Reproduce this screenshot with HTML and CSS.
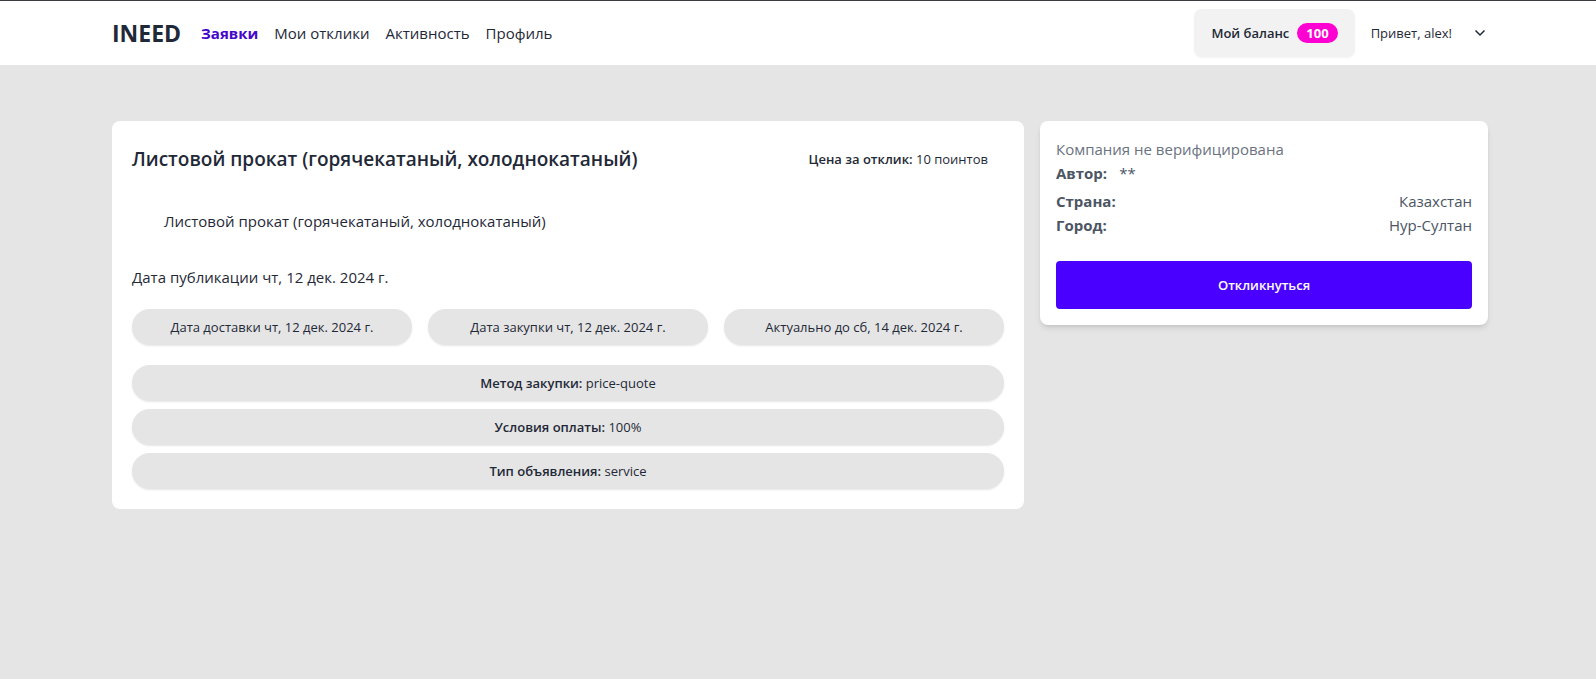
FILE: index.html
```html
<!DOCTYPE html>
<html lang="ru">
<head>
<meta charset="utf-8">
<title>INEED</title>
<meta name="viewport" content="width=device-width, initial-scale=1">
<link rel="stylesheet" href="styles.css">
</head>
<body>
<header class="header">
  <nav class="nav">
    <a class="logo" href="#">INEED</a>
    <a class="nav-link active" href="#">Заявки</a>
    <a class="nav-link" href="#">Мои отклики</a>
    <a class="nav-link" href="#">Активность</a>
    <a class="nav-link" href="#">Профиль</a>
  </nav>
  <div class="account">
    <button class="balance" type="button">Мой баланс <span class="badge">100</span></button>
    <button class="user" type="button">Привет, alex!
      <svg class="chevron" viewBox="0 0 12 12" aria-hidden="true"><path d="M1.500 3.500 6 8l4.500-4.500"/></svg>
    </button>
  </div>
</header>
<main class="content">
  <article class="card request">
    <div class="request-head">
      <h1 class="title">Листовой прокат (горячекатаный, холоднокатаный)</h1>
      <p class="price"><b>Цена за отклик:</b> 10 поинтов</p>
    </div>
    <p class="description">Листовой прокат (горячекатаный, холоднокатаный)</p>
    <p class="published">Дата публикации чт, 12 дек. 2024 г.</p>
    <div class="dates">
      <div class="pill">Дата доставки чт, 12 дек. 2024 г.</div>
      <div class="pill">Дата закупки чт, 12 дек. 2024 г.</div>
      <div class="pill">Актуально до сб, 14 дек. 2024 г.</div>
    </div>
    <div class="terms">
      <div class="pill"><b>Метод закупки:</b> price-quote</div>
      <div class="pill"><b>Условия оплаты:</b> 100%</div>
      <div class="pill"><b>Тип объявления:</b> service</div>
    </div>
  </article>
  <aside class="card company">
    <p class="unverified">Компания не верифицирована</p>
    <p class="author"><strong>Автор:</strong><span>**</span></p>
    <dl class="facts">
      <div class="fact"><dt>Страна:</dt><dd>Казахстан</dd></div>
      <div class="fact"><dt>Город:</dt><dd>Нур-Султан</dd></div>
    </dl>
    <button class="respond" type="button">Откликнуться</button>
  </aside>
</main>
</body>
</html>
```
FILE: styles.css
```css
* {
  box-sizing: border-box;
  margin: 0;
}

body {
  background: #e5e5e5;
  color: #1f2937;
  font: 15px/24px "Segoe UI", "Open Sans", "Noto Sans", sans-serif;
}

a {
  color: inherit;
  text-decoration: none;
}

button {
  border: 0;
  background: none;
  color: inherit;
  font: inherit;
  cursor: pointer;
}

b {
  font-weight: 600;
}

.header {
  display: flex;
  align-items: center;
  justify-content: space-between;
  padding: 8px 108px 8px 112px;
  border-top: 1px solid #3d3b3f;
  background: #fff;
}

.nav {
  display: flex;
  align-items: center;
  gap: 16px;
}

.logo {
  margin-right: 4px;
  font-size: 23px;
  font-weight: 700;
}

.active {
  color: #4506cb;
  font-weight: 700;
}

.account {
  display: flex;
  align-items: center;
  gap: 16px;
}

.balance {
  display: flex;
  align-items: center;
  gap: 8px;
  height: 48px;
  padding: 0 17px;
  border-radius: 8px;
  background: #f2f2f2;
  box-shadow: 0 1px 2px rgba(0, 0, 0, 0.05);
  font-size: 13px;
  font-weight: 600;
}

.badge {
  padding: 0 9px;
  border-radius: 10px;
  background: #ff00d3;
  color: #fff;
  font-size: 13px;
  font-weight: 700;
  line-height: 20px;
}

.user {
  display: flex;
  align-items: center;
  gap: 22px;
  padding: 0;
  font-size: 13px;
}

.chevron {
  width: 12px;
  height: 12px;
  margin-right: 2px;
  fill: none;
  stroke: #1f2937;
  stroke-width: 1.5;
}

.content {
  display: grid;
  grid-template-columns: repeat(3, 1fr);
  align-items: start;
  gap: 16px;
  padding: 56px 108px 56px 112px;
}

.card {
  border-radius: 8px;
  background: #fff;
}

.request {
  grid-column: span 2;
  padding: 20px;
}

.request-head {
  display: flex;
  align-items: center;
  justify-content: space-between;
}

.title {
  font-size: 19px;
  font-weight: 600;
  line-height: 28px;
}

.price {
  padding: 8px 16px;
  font-size: 13px;
  line-height: 20px;
}

.description {
  padding: 32px;
}

.dates {
  display: grid;
  grid-template-columns: repeat(3, 1fr);
  gap: 16px;
  margin: 20px 0;
}

.terms {
  display: grid;
  gap: 8px;
}

.pill {
  padding: 8px 16px;
  border-radius: 18px;
  background: #e5e5e5;
  box-shadow: 0 1px 2px rgba(0, 0, 0, 0.1);
  font-size: 13px;
  line-height: 20px;
  text-align: center;
}

.company {
  padding: 16px;
  box-shadow: 0 4px 6px -1px rgba(0, 0, 0, 0.1), 0 2px 4px -2px rgba(0, 0, 0, 0.1);
  color: #4b5563;
}

.unverified {
  color: #6b7280;
}

.author {
  display: flex;
  gap: 12px;
}

.facts {
  margin: 4px 0 24px;
}

.fact {
  display: flex;
  justify-content: space-between;
}

.fact dt {
  font-weight: 700;
}

.respond {
  width: 100%;
  height: 48px;
  border-radius: 4px;
  background: #4a00ff;
  color: #fff;
  font-size: 13px;
  font-weight: 600;
}
```
